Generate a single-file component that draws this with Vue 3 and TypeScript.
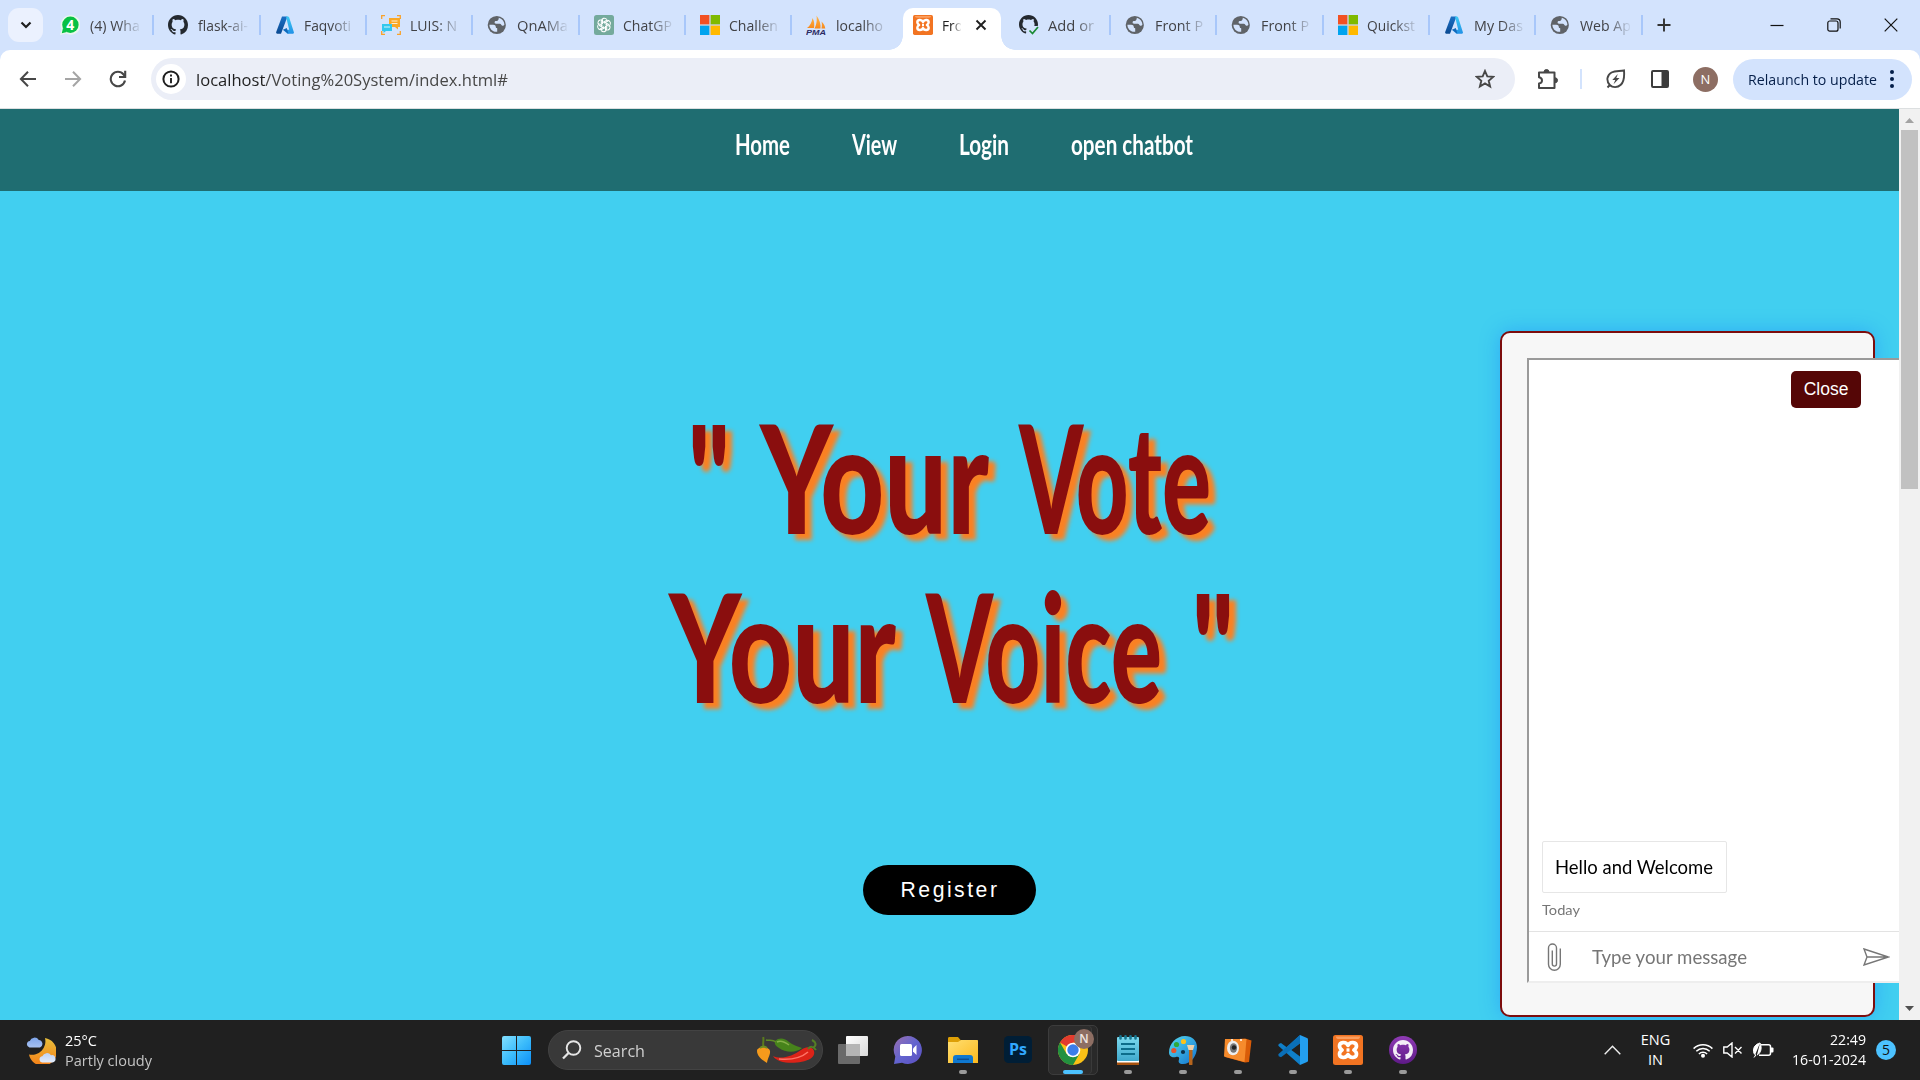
<script setup lang="ts">
interface Tab {
  icon: string
  title: string
  width: number
  active?: boolean
}

interface TaskApp {
  icon: string
  open?: boolean
  active?: boolean
}

const tabs: Tab[] = [
  { icon: 'whatsapp', title: '(4) Wha', width: 50 },
  { icon: 'github', title: 'flask-ai-', width: 50 },
  { icon: 'azure', title: 'Faqvoti', width: 47 },
  { icon: 'luis', title: 'LUIS: N', width: 47 },
  { icon: 'globe', title: 'QnAMa', width: 51 },
  { icon: 'openai', title: 'ChatGP', width: 49 },
  { icon: 'microsoft', title: 'Challen', width: 49 },
  { icon: 'pma', title: 'localho', width: 47 },
  { icon: 'xampp', title: 'Fro', width: 21, active: true },
  { icon: 'githubcheck', title: 'Add or', width: 46 },
  { icon: 'globe', title: 'Front P', width: 48 },
  { icon: 'globe', title: 'Front P', width: 48 },
  { icon: 'microsoft', title: 'Quickst', width: 48 },
  { icon: 'azure', title: 'My Das', width: 49 },
  { icon: 'globe', title: 'Web Ap', width: 51 },
]

const navLinks = [
  { label: 'Home', width: 55 },
  { label: 'View', width: 45 },
  { label: 'Login', width: 50 },
  { label: 'open chatbot', width: 122 },
]

const slogan = [
  [
    { text: '"', width: 42 },
    { text: 'Your', width: 229 },
    { text: 'Vote', width: 192 },
  ],
  [
    { text: 'Your', width: 227 },
    { text: 'Voice', width: 236 },
    { text: '"', width: 42 },
  ],
]

const apps: TaskApp[] = [
  { icon: 'taskview' },
  { icon: 'teams' },
  { icon: 'explorer', open: true },
  { icon: 'photoshop' },
  { icon: 'chrome', active: true },
  { icon: 'notepad', open: true },
  { icon: 'paint', open: true },
  { icon: 'snip', open: true },
  { icon: 'vscode', open: true },
  { icon: 'xampp', open: true },
  { icon: 'ghdesktop', open: true },
]

// Condenses or widens a label so that it takes the given number of pixels.
const vFit = {
  mounted(el: HTMLElement, binding: { value: number }) {
    const natural = el.getBoundingClientRect().width
    el.style.transform = `scaleX(${binding.value / natural})`
    el.style.marginRight = `${binding.value - natural}px`
  },
}
</script>

<template>
  <div class="desktop">
    <svg class="defs" width="0" height="0">
      <defs>
        <linearGradient id="gAz" x1="0" y1="0" x2="0" y2="1"><stop offset="0" stop-color="#1b6fc4" /><stop offset="1" stop-color="#0a4a92" /></linearGradient>
        <linearGradient id="gAz2" x1="0" y1="0" x2="0" y2="1"><stop offset="0" stop-color="#3ccbf4" /><stop offset="1" stop-color="#2291e6" /></linearGradient>
        <linearGradient id="gWin" x1="0" y1="0" x2="1" y2="1"><stop offset="0" stop-color="#83e0ff" /><stop offset=".5" stop-color="#3cbcfb" /><stop offset="1" stop-color="#0c8ff8" /></linearGradient>
        <linearGradient id="gMoon" x1="0" y1="0" x2="0" y2="1"><stop offset="0" stop-color="#e9c03c" /><stop offset="1" stop-color="#f57f17" /></linearGradient>
        <linearGradient id="gCloud" x1="0" y1="0" x2="0" y2="1"><stop offset="0" stop-color="#7fa6ec" /><stop offset="1" stop-color="#e3ecfb" /></linearGradient>
        <linearGradient id="gTeams" x1="0" y1="0" x2="1" y2="1"><stop offset="0" stop-color="#9b6fae" /><stop offset=".5" stop-color="#6364cf" /><stop offset="1" stop-color="#5b4fc0" /></linearGradient>
        <linearGradient id="gFold" x1="0" y1="0" x2="1" y2="1"><stop offset="0" stop-color="#ffdf72" /><stop offset="1" stop-color="#fcb91d" /></linearGradient>
        <linearGradient id="gNote" x1="0" y1="0" x2="0" y2="1"><stop offset="0" stop-color="#7bd9ee" /><stop offset="1" stop-color="#3fa9cd" /></linearGradient>
        <linearGradient id="gPaint" x1="0" y1="0" x2="1" y2="1"><stop offset="0" stop-color="#56dbf0" /><stop offset="1" stop-color="#1273d0" /></linearGradient>
        <linearGradient id="gGh" x1="0" y1="0" x2="0" y2="1"><stop offset="0" stop-color="#8f3bb5" /><stop offset="1" stop-color="#5e1a87" /></linearGradient>
        <linearGradient id="gTv" x1="0" y1="0" x2="1" y2="1"><stop offset="0" stop-color="#fff" /><stop offset="1" stop-color="#dadada" /></linearGradient>
        <linearGradient id="gPma" x1="0" y1="0" x2="0" y2="1"><stop offset="0" stop-color="#ffb84d" /><stop offset="1" stop-color="#f7891b" /></linearGradient>
      </defs>
      <symbol id="i-whatsapp" viewBox="0 0 20 20"><path d="M0 20 1.500 14A10 9.800 0 1 1 6 18.600Z" fill="#e9f7ee" /><circle cx="10.400" cy="9.800" r="8.200" fill="#08c143" /><path d="M1.800 18.200 3 13l4 4Z" fill="#08c143" /><text x="10.200" y="15" font-size="14" font-weight="700" font-family="Open Sans, sans-serif" fill="#fff" text-anchor="middle">4</text></symbol>
      <symbol id="i-octo" viewBox="0 0 16 16"><path d="M8 0C3.58 0 0 3.58 0 8c0 3.54 2.29 6.53 5.47 7.59.4.07.55-.17.55-.38 0-.19-.01-.82-.01-1.49-2.01.37-2.53-.49-2.69-.94-.09-.23-.48-.94-.82-1.13-.28-.15-.68-.52-.01-.53.63-.01 1.08.58 1.23.82.72 1.21 1.87.87 2.33.66.07-.52.28-.87.51-1.07-1.78-.2-3.64-.89-3.64-3.95 0-.87.31-1.59.82-2.15-.08-.2-.36-1.02.08-2.12 0 0 .67-.21 2.2.82.64-.18 1.32-.27 2-.27s1.36.09 2 .27c1.53-1.04 2.2-.82 2.2-.82.44 1.1.16 1.92.08 2.12.51.56.82 1.27.82 2.15 0 3.07-1.87 3.75-3.65 3.95.29.25.54.73.54 1.48 0 1.07-.01 1.93-.01 2.2 0 .21.15.46.55.38A8.01 8.01 0 0 0 16 8c0-4.42-3.58-8-8-8z" /></symbol>
      <symbol id="i-github" viewBox="0 0 20 20"><use href="#i-octo" width="20" height="20" fill="#24292f" /></symbol>
      <symbol id="i-githubcheck" viewBox="0 0 20 20"><use href="#i-octo" width="19" height="19" fill="#24292f" /><path d="M8 11h12v9H8Z" fill="#d3e3fd" /><path d="m10.500 15.500 3 3 5.500-6.500" fill="none" stroke="#1a8a34" stroke-width="1.700" /></symbol>
      <symbol id="i-azure" viewBox="0 0 20 20"><path d="M7 1.500h5.500L6 18.700H2.300c-1 0-1.400-.8-1.100-1.600Z" fill="url(#gAz)" /><path d="M11 1.500h1.800c.7 0 1.200.4 1.400 1l4.700 14.800c.3.800-.3 1.400-1 1.400h-5.500L8 14.800h6.200Z" fill="url(#gAz2)" /><path d="m8 14.800 3.800-1.800 1.600 5.700Z" fill="#1468b8" /></symbol>
      <symbol id="i-luis" viewBox="0 0 20 20"><path d="M.7 4V.7H4M16 .7h3.300V4M19.300 16v3.300H16M4 19.300H.7V16" fill="none" stroke="#f9a22b" stroke-width="1.300" /><path d="M8 3h11v9h-2v2.500L14 12H8Z" fill="#f9a825" /><path d="M1 9h10v7H5l-2.500 2V16H1Z" fill="#32c8ee" /><path d="M10.500 6h6M10.500 8.500h6M3 12h6" stroke="#fff" stroke-width="1" opacity=".8" /></symbol>
      <symbol id="i-globe" viewBox="0 0 20 20"><circle cx="9.800" cy="10" r="9.100" fill="#5f6368" /><path d="M2.400 9.800h3.800c1.500 0 2.600.9 2.600 2.200 0 .8.500 1.200 1.400 1.200v3.600c-4.500.6-7.800-3-7.800-7ZM11.800 2.800c3.200.8 5.500 3.600 5.600 7-.5.800-1.500 1.200-2.500.7-.8-.4-.8-1.700-2-1.700H9.200c-1.300 0-1.900-.9-1.500-2 .3-.8 1.200-.8 2-.8 1.300 0 2.100-1.200 2.100-3.200Z" fill="#d3e3fd" /></symbol>
      <symbol id="i-openai" viewBox="0 0 20 20"><rect width="20" height="20" rx="2.500" fill="#74aa9c" /><g fill="none" stroke="#fff" stroke-width="1.050"><path id="petal" d="M7.300 11.300V6.200a3 3 0 0 1 5.500-1.600M10 8.300l4.300-2.500" /><use href="#petal" transform="rotate(60 10 10)" /><use href="#petal" transform="rotate(120 10 10)" /><use href="#petal" transform="rotate(180 10 10)" /><use href="#petal" transform="rotate(240 10 10)" /><use href="#petal" transform="rotate(300 10 10)" /></g></symbol>
      <symbol id="i-microsoft" viewBox="0 0 20 20"><path fill="#c9c9c9" d="M0 0h20v20H0z" opacity=".7" /><path fill="#f25022" d="M0 0h9.300v9.300H0z" /><path fill="#7fba00" d="M10.700 0H20v9.300h-9.300z" /><path fill="#00a4ef" d="M0 10.700h9.300V20H0z" /><path fill="#ffb900" d="M10.700 10.700H20V20h-9.300z" /></symbol>
      <symbol id="i-pma" viewBox="0 0 20 20"><path d="M1 13c3-2 5-6 5.500-10 2 3 2 7 1.500 10ZM8.500 13.500C11 9 11 4 10.500.5c3 4 4.500 9 4 13ZM15.500 13.500c.6-3 .5-5 0-7 2.500 2 3.500 5 3.800 7Z" fill="url(#gPma)" /><text x="0" y="19.500" font-size="7.600" font-weight="700" font-style="italic" font-family="Liberation Sans, sans-serif" textLength="20" lengthAdjust="spacingAndGlyphs" fill="#2b2b63">PMA</text></symbol>
      <symbol id="i-xampp" viewBox="0 0 30 30"><rect width="30" height="30" rx="2.500" fill="#f27422" /><path d="M3 1.500h24c0 2-1 2.500-3 2.500H6C4 4 3 3.500 3 1.500Z" fill="#ffb27a" opacity=".7" /><path d="M15 10.300C13 6.300 6.500 6.700 6.500 11c0 2 1 3 2.600 4-1.600 1-2.600 2-2.600 4 0 4.300 6.500 4.700 8.500.7 2 4 8.500 3.600 8.500-.7 0-2-1-3-2.600-4 1.600-1 2.600-2 2.600-4 0-4.300-6.500-4.700-8.500-.7Z" fill="none" stroke="#fff" stroke-width="3.700" stroke-linejoin="round" /><path d="M13.500 15h3" stroke="#fff" stroke-width="3.400" /></symbol>
      <symbol id="i-taskview" viewBox="0 0 30 30"><rect x="8" y="1" width="22" height="20" rx="1" fill="url(#gTv)" /><rect x="0" y="9" width="22" height="20" rx="1" fill="#7d7d7d" opacity=".8" /><rect x="8" y="9" width="14" height="12" fill="#b5b5b5" /></symbol>
      <symbol id="i-teams" viewBox="0 0 30 30"><path d="M15 1a14 14 0 1 1-6 26.700L1 29l1.300-7.500A14 14 0 0 1 15 1Z" fill="url(#gTeams)" /><rect x="7" y="9" width="12" height="12" rx="1.500" fill="#fff" /><path d="m20 13.500 3.500-3.500v10L20 16.500Z" fill="#fff" /></symbol>
      <symbol id="i-explorer" viewBox="0 0 30 30"><path d="M0 3.500C0 2.500.6 2 1.500 2H10l3 3.500V12H0Z" fill="#dd9f06" /><path d="M0 7h10l3-2h16c.6 0 1 .4 1 1v22H0Z" fill="url(#gFold)" /><path d="M5 28v-5c0-2 1-3 3-3h14c2 0 3 1 3 3v5Z" fill="#0f78d0" /><path d="M9 24.300h12" stroke="#0a4f96" stroke-width="1.500" /></symbol>
      <symbol id="i-photoshop" viewBox="0 0 30 30"><rect x="1" y="1" width="28" height="27" rx="4.500" fill="#001e36" /><text x="15" y="19.500" font-size="16" font-weight="700" font-family="Open Sans, sans-serif" fill="#31a8ff" text-anchor="middle" textLength="18" lengthAdjust="spacingAndGlyphs">Ps</text></symbol>
      <symbol id="i-chrome" viewBox="0 0 30 30"><circle cx="15" cy="15" r="15" fill="#fbc116" /><path d="M15 15 2 7.500A15 15 0 0 1 28 7.500H15Z" fill="#e33b2e" /><path d="M2 7.500A15 15 0 0 0 15 30l6.500-11.200L8.500 18.800Z" fill="#22913f" /><circle cx="15" cy="15" r="7.300" fill="#fff" /><circle cx="15" cy="15" r="5.700" fill="#3b7de9" /></symbol>
      <symbol id="i-notepad" viewBox="0 0 30 30"><path d="M4 26h22v4H4Z" fill="#a6520f" /><path d="M4 25h22v2.500H4Z" fill="#fff" /><rect x="4" y="2" width="22" height="24" rx="1" fill="url(#gNote)" /><path d="M7.500 1.300v2.200M12.500 1.300v2.200M17.500 1.300v2.200M22.500 1.300v2.200" stroke="#16758f" stroke-width="2.600" stroke-linecap="round" /><path d="M8 9h14M8 14h14M8 19h14" stroke="#0d6d8b" stroke-width="1.800" /></symbol>
      <symbol id="i-paint" viewBox="0 0 30 30"><path d="M17 1c7 0 12 4.500 12 11 0 9-6 17-14 17-4 0-5-2-4-4.500.8-2-.5-3-3-2.500C4 23 1 21 1 17.500 1 9 8 1 17 1Z" fill="url(#gPaint)" /><circle cx="15.500" cy="6.500" r="2.600" fill="#fcc21b" /><circle cx="8.500" cy="9.500" r="2.600" fill="#2eaa3b" /><circle cx="5.800" cy="15.500" r="2.600" fill="#e5532d" /><circle cx="15" cy="17" r="2.100" fill="#0c3350" /><path d="M19 10h7.500l-1.500 5h-4.500Z" fill="#eed2ac" /><path d="M21 15h3.500v14a1.700 1.700 0 0 1-3.500 0Z" fill="#b6651d" /></symbol>
      <symbol id="i-snip" viewBox="0 0 30 30"><path d="m3 5 19-1.500 6.500 2L26 27l-4 .5L2 22Z" fill="#d95c08" /><path d="M2 4h21.500l-2 23L1 21.500Z" fill="#f68b2c" /><ellipse cx="10" cy="13" rx="6" ry="7.300" fill="#eee" /><ellipse cx="10.500" cy="13" rx="3.600" ry="4.800" fill="#777" /><circle cx="11" cy="12.500" r="2.200" fill="#222" /><path d="M8 5h2M17 5h2" stroke="#fff" stroke-width="1.500" /></symbol>
      <symbol id="i-vscode" viewBox="0 0 30 30"><path d="M22 0 8.700 12.200 3 7.900.700 9v0L.3 10.700 22 30Z" fill="#0f7fc9" /><path d="M22 8 3 22.200.700 21.200.3 19.300 22 0Z" fill="#0a6fb8" /><path d="M22 0 29 3c.6.300 1 .8 1 1.500v21c0 .7-.4 1.200-1 1.500l-7 3Z" fill="#239ff0" /><path d="M22 8.500v13L13.300 15Z" fill="#202020" /></symbol>
      <symbol id="i-ghdesktop" viewBox="0 0 30 30"><circle cx="15" cy="15" r="14" fill="url(#gGh)" /><use href="#i-octo" x="5" y="5" width="20" height="20" fill="#f3edf6" /></symbol>
    </svg>

    <header class="tabstrip">
      <button class="tabsearch"><svg width="12" height="8" viewBox="0 0 12 8"><path d="m1.500 1.500 4.500 4.500 4.500-4.500" fill="none" stroke="#1f1f1f" stroke-width="2.200" /></svg></button>
      <div v-for="(tab, i) in tabs" :key="i" class="tab" :class="{ active: tab.active, bare: i === 7 || tab.active }">
        <svg class="favicon"><use :href="'#i-' + tab.icon" /></svg>
        <span class="tabtitle"><span v-fit="tab.width" class="fit">{{ tab.title }}</span></span>
        <svg v-if="tab.active" class="tabclose" width="12" height="12" viewBox="0 0 12 12"><path d="m1.500 1.500 9 9m0-9-9 9" stroke="#1f1f1f" stroke-width="1.900" /></svg>
      </div>
      <svg class="newtab" width="14" height="14" viewBox="0 0 14 14"><path d="M7 .5v13M.5 7h13" stroke="#333" stroke-width="1.900" /></svg>
      <div class="winctl">
        <svg width="14" height="14" viewBox="0 0 14 14"><path d="M.5 7.500h13" stroke="#111" stroke-width="1.200" /></svg>
        <svg width="14" height="14" viewBox="0 0 14 14"><g fill="none" stroke="#111" stroke-width="1.200"><rect x=".8" y="3" width="10.200" height="10.200" rx="2" /><path d="M3.500.8H10c2 0 3.200 1.200 3.200 3.200v6.500" /></g></svg>
        <svg width="14" height="14" viewBox="0 0 14 14"><path d="m.7.700 12.600 12.600m0-12.600L.7 13.300" stroke="#111" stroke-width="1.200" /></svg>
      </div>
    </header>

    <div class="toolbar">
      <div class="navbtns">
        <svg width="18" height="18" viewBox="0 0 18 18"><path d="M17 9H2.500M9 1.800 1.900 9 9 16.200" fill="none" stroke="#474747" stroke-width="2" /></svg>
        <svg width="18" height="18" viewBox="0 0 18 18"><path d="M1 9h14.500M9 1.800 16.100 9 9 16.200" fill="none" stroke="#a5a5a5" stroke-width="2" /></svg>
        <svg width="18" height="18" viewBox="0 0 18 18"><path d="M16 10.500A7.200 7.200 0 1 1 14.600 4.500L16 6.300" fill="none" stroke="#474747" stroke-width="2.100" /><path d="M16.200.8v6.200H10" fill="none" stroke="#474747" stroke-width="2.100" /></svg>
      </div>
      <div class="omnibox">
        <span class="siteinfo"><svg width="18" height="18" viewBox="0 0 18 18"><circle cx="9" cy="9" r="7.600" fill="none" stroke="#1f1f1f" stroke-width="2" /><path d="M9 8v5.200M9 4.600v2" stroke="#1f1f1f" stroke-width="1.900" /></svg></span>
        <span v-fit="312" class="fit url"><b>localhost</b>/Voting%20System/index.html#</span>
        <svg class="star" width="20" height="20" viewBox="0 0 20 20"><path d="m10 2 2.300 5.400 5.900.5-4.500 3.900 1.400 5.700L10 14.400l-5.100 3.100 1.400-5.700L1.800 7.900l5.900-.5Z" fill="none" stroke="#474747" stroke-width="1.900" /></svg>
      </div>
      <svg class="puzzle" width="22" height="22" viewBox="0 0 22 22"><path d="M2 4.500h15.500V20H2v-4.500c4-.5 4-5.500 0-6.200Z" fill="none" stroke="#474747" stroke-width="2" stroke-linejoin="round" /><path d="M7 4a2.500 2.500 0 0 1 5 0M18 9.800a2.500 2.500 0 0 1 0 5" fill="#474747" stroke="#474747" /></svg>
      <i class="toolsep"></i>
      <svg class="leaf" width="20" height="20" viewBox="0 0 20 20"><path d="M3.800 16C0 12 .8 6 5.500 3.500 9.500 1.500 14 2.500 18 1.500c.5 6 .3 11-3.200 14.300C11.500 19 6.500 18.800 3.800 16Zm0 0L1.500 18.500" fill="none" stroke="#474747" stroke-width="1.900" /><path d="m11.800 5-5.500 6h3L7.500 15.300l6-6.300h-3.200Z" fill="#474747" /></svg>
      <svg class="panel" width="18" height="18" viewBox="0 0 18 18"><rect x="1" y="1" width="16" height="16" rx="1" fill="none" stroke="#3c3c3c" stroke-width="2" /><path d="M10.500 1H17v16h-6.500Z" fill="#3c3c3c" /></svg>
      <span class="avatar">N</span>
      <button class="relaunch"><span v-fit="129" class="fit">Relaunch to update</span><svg width="4" height="18" viewBox="0 0 4 18"><g fill="#041e49"><circle cx="2" cy="2" r="2" /><circle cx="2" cy="9" r="2" /><circle cx="2" cy="16" r="2" /></g></svg></button>
    </div>

    <div class="viewport">
      <main class="page">
        <nav class="sitenav">
          <a v-for="link in navLinks" :key="link.label" v-fit="link.width" class="fit">{{ link.label }}</a>
        </nav>
        <section class="hero">
          <h1>
            <span v-for="(line, l) in slogan" :key="l" class="line">
              <span v-for="(word, w) in line" :key="w" v-fit="word.width" class="fit">{{ word.text }}</span>
            </span>
          </h1>
          <button class="register">Register</button>
        </section>
        <aside class="chat">
          <div class="frame">
            <div class="transcript">
              <div class="bubble"><span v-fit="158" class="fit">Hello and Welcome</span></div>
              <div class="stamp"><span v-fit="38" class="fit">Today</span></div>
            </div>
            <div class="sendbox">
              <svg width="15" height="28" viewBox="0 0 15 28"><path d="M13.300 5.500v15.800a5.900 5.900 0 0 1-11.800 0V5a4 4 0 0 1 8 0v16a2.100 2.100 0 0 1-4.200 0V7.500" fill="none" stroke="#767676" stroke-width="1.400" /></svg>
              <span v-fit="155" class="fit">Type your message</span>
              <svg class="send" width="27" height="18" viewBox="0 0 27 18"><path d="M1 1 25.500 9 1 17l3-8Zm3 8h21.500" fill="none" stroke="#767676" stroke-width="1.400" /></svg>
            </div>
          </div>
          <button class="close">Close</button>
        </aside>
      </main>
      <div class="scrollbar">
        <svg width="9" height="5" viewBox="0 0 9 5"><path d="M0 5 4.500 0 9 5Z" fill="#a3a3a3" /></svg>
        <i class="thumb"></i>
        <svg width="9" height="5" viewBox="0 0 9 5"><path d="m0 0 4.500 5L9 0Z" fill="#505050" /></svg>
      </div>
    </div>

    <footer class="taskbar">
      <div class="weather">
        <svg width="30" height="28" viewBox="0 0 30 28"><path d="M19 2a14 14 0 1 1-16 16.500A13.500 13.500 0 0 0 19 2Z" fill="url(#gMoon)" /><path d="M3.500 11.500a3.300 3.300 0 0 1 .3-6.500 5 5 0 0 1 9-1 3.900 3.900 0 0 1 1.200 7.500ZM16 26.500a3.200 3.200 0 0 1 .3-6.300 5 5 0 0 1 8.700-1 3.700 3.700 0 0 1 1.500 7.300Z" fill="url(#gCloud)" /></svg>
        <div class="stack"><span v-fit="32" class="fit">25°C</span><span v-fit="87" class="fit dim">Partly cloudy</span></div>
      </div>
      <div class="start"><svg width="29" height="29" viewBox="0 0 29 29"><path d="M2 0h12v14H0V2Q0 0 2 0ZM15 0h12q2 0 2 2v12H15ZM0 15h14v14H2q-2 0-2-2ZM15 15h14v12q0 2-2 2H15Z" fill="url(#gWin)" /></svg></div>
      <div class="search">
        <svg width="20" height="20" viewBox="0 0 20 20"><circle cx="11.500" cy="8" r="6.800" fill="none" stroke="#e6e6e6" stroke-width="1.900" /><path d="m6.500 13-5.500 5.500" stroke="#e6e6e6" stroke-width="2.300" /></svg>
        <span v-fit="51" class="fit">Search</span>
        <svg class="peppers" width="60" height="28" viewBox="0 0 60 28"><path d="M0 15c0-5 12-5 13 0 .5 4-2 6-3 12C5 24 0 20 0 15Z" fill="#f59a1c" /><path d="M6.500 11c-1-4 .5-6-.3-10" fill="none" stroke="#5a7a1d" stroke-width="2" /><path d="M3 12q3.500-3 7 0" fill="none" stroke="#6c8d22" stroke-width="2" /><path d="M18 5c4-4 10-3 14 1 4 3 8 4 13 6-6 5-16 5-23 0-3-2-5-4-4-7Z" fill="#47831b" /><path d="M20 6c4-2 8 0 12 3" fill="none" stroke="#85b048" stroke-width="1.500" /><path d="M19 6C15 3 12 5 9 4" fill="none" stroke="#5e8a26" stroke-width="1.500" /><path d="M16 20c8 4 20 0 28-6 5-4 9-3 12-1 2 3 2 7-3 10-9 5-32 6-37-3Z" fill="#dc2318" /><path d="M22 23c11 1 22-1 29-7" fill="none" stroke="#ff7467" stroke-width="1.600" /><path d="M51 13c2-3 5-3 8 1M56 12c4-3 3-6-1-8" fill="none" stroke="#557f24" stroke-width="2" /></svg>
      </div>
      <div class="apps">
        <div v-for="app in apps" :key="app.icon" class="app" :class="{ open: app.open, current: app.active }">
          <svg class="appicon"><use :href="'#i-' + app.icon" /></svg>
          <span v-if="app.active" class="profile">N</span>
        </div>
      </div>
      <div class="tray">
        <svg class="chev" width="17" height="10" viewBox="0 0 17 10"><path d="m.7 9.300 7.800-8 7.800 8" fill="none" stroke="#eee" stroke-width="1.400" /></svg>
        <div class="stack lang"><span>ENG</span><span>IN</span></div>
        <svg class="wifi" width="20" height="15" viewBox="0 0 20 15"><g fill="none" stroke="#fff" stroke-width="1.500"><path d="M.6 5.600a13.300 13.300 0 0 1 18.800 0M3.300 8.300a9.500 9.500 0 0 1 13.400 0M5.900 11a5.800 5.800 0 0 1 8.200 0" /></g><circle cx="10" cy="12.800" r="2" fill="#fff" /></svg>
        <svg class="mute" width="20" height="16" viewBox="0 0 20 16"><path d="M.8 5h3.400L9 1v14l-4.800-4H.8ZM12 5l6.500 6.500M18.500 5 12 11.500" fill="none" stroke="#fff" stroke-width="1.400" /></svg>
        <svg class="batt" width="21" height="16" viewBox="0 0 21 16"><path d="M8 2.800h7.500a2 2 0 0 1 2 2v6.400a2 2 0 0 1-2 2H6" fill="none" stroke="#fff" stroke-width="1.500" /><path d="M18 5.500h1.500q1 0 1 1v3q0 1-1 1H18Z" fill="#fff" /><path d="M7 1C3 2 0 5 .5 9.500c.2 2 1.200 3.300 2.500 3.500L1 15.500M7 1c2 4 1.500 10-3 12" fill="#fff" stroke="#fff" /></svg>
        <div class="stack clock"><span v-fit="36" class="fit">22:49</span><span v-fit="74" class="fit">16-01-2024</span></div>
        <span class="count">5</span>
      </div>
    </footer>
  </div>
</template>

<style>
body {
  overflow: hidden;
}
</style>

<style scoped>
* {
  box-sizing: border-box;
}
.desktop {
  width: 1920px;
  height: 1080px;
  display: flex;
  flex-direction: column;
  overflow: hidden;
  font-family: "Open Sans", "Noto Sans", sans-serif;
  font-size: 15px;
  background: #d3e3fd;
}
.defs {
  position: absolute;
}
button {
  border: 0;
  padding: 0;
  font: inherit;
}
svg {
  flex: none;
  display: block;
}
.fit {
  display: inline-block;
  flex: none;
  white-space: nowrap;
  transform-origin: left center;
}
.tabstrip {
  height: 50px;
  flex: none;
  display: flex;
  align-items: center;
}
.tabsearch {
  width: 35px;
  height: 34px;
  flex: none;
  margin: 0 5px 0 8px;
  border-radius: 11px;
  background: #ebf1fe;
  display: flex;
  align-items: center;
  justify-content: center;
}
.tab {
  width: 106.320px;
  height: 20px;
  flex: none;
  display: flex;
  align-items: center;
  padding-left: 14px;
  border-right: 2px solid #a8c7fa;
  color: #414246;
}
.tab:nth-child(2) {
  padding-left: 12px;
}
.tab.bare {
  border-color: transparent;
}
.favicon {
  width: 20px;
  height: 20px;
}
.tabtitle {
  width: 50px;
  height: 24px;
  line-height: 24px;
  margin-left: 9.500px;
  overflow: hidden;
  mask-image: linear-gradient(90deg, #000 55%, transparent 104%);
}
.tab.active {
  width: 98.320px;
  margin: 0 4px;
  height: 42px;
  align-self: flex-end;
  padding: 0 0 8px 10px;
  border: 0;
  border-radius: 10px 10px 0 0;
  background: #fff;
  color: #1f1f1f;
  position: relative;
}
.tab.active::before,
.tab.active::after {
  content: "";
  position: absolute;
  bottom: 0;
  left: -14px;
  width: 14px;
  height: 14px;
  background: radial-gradient(circle at 0 0, transparent 13.500px, #fff 14px);
}
.tab.active::after {
  left: auto;
  right: -14px;
  background: radial-gradient(circle at 100% 0, transparent 13.500px, #fff 14px);
}
.tab.active .tabtitle {
  width: 19px;
}
.tabclose {
  margin-left: 14px;
}
.newtab {
  margin-left: 14px;
}
.winctl {
  margin-left: auto;
  padding-right: 22px;
  display: flex;
  gap: 43px;
}
.toolbar {
  height: 59px;
  flex: none;
  display: flex;
  align-items: center;
  background: #fff;
  border-radius: 10px 10px 0 0;
  border-bottom: 1px solid #dcdfe0;
}
.navbtns {
  display: flex;
  flex: none;
  gap: 27px;
  padding-left: 19px;
  width: 151px;
}
.omnibox {
  width: 1364px;
  height: 42px;
  flex: none;
  border-radius: 21px;
  background: #ebeef7;
  display: flex;
  align-items: center;
  padding: 0 20px 0 5px;
}
.siteinfo {
  width: 30px;
  height: 30px;
  flex: none;
  border-radius: 50%;
  background: #fff;
  display: flex;
  align-items: center;
  justify-content: center;
  margin-right: 10px;
}
.url {
  font-size: 17px;
  color: #474747;
}
.url b {
  font-weight: 400;
  color: #1f1f1f;
}
.star {
  margin-left: auto;
}
.puzzle {
  margin-left: 22px;
}
.toolsep {
  width: 2px;
  height: 20px;
  flex: none;
  background: #d3e3fd;
  margin: 0 24px 0 21px;
}
.panel {
  margin-left: 25px;
}
.avatar {
  width: 25px;
  height: 25px;
  flex: none;
  line-height: 25px;
  text-align: center;
  border-radius: 50%;
  background: #8d6e63;
  color: #fff;
  font-size: 13px;
  margin: 0 15px 0 24px;
}
.relaunch {
  width: 179px;
  height: 41px;
  flex: none;
  border-radius: 21px;
  background: #d3e3fd;
  color: #041e49;
  display: flex;
  align-items: center;
  gap: 13px;
  padding-left: 15px;
}
.viewport {
  height: 911px;
  flex: none;
  display: flex;
}
.page {
  width: 1899px;
  position: relative;
  overflow: hidden;
  background: #41cff0;
}
.sitenav {
  height: 82px;
  background: #1f6d71;
  display: flex;
  padding-left: 735px;
  gap: 62px;
  font: 700 29px/34px "Lato", sans-serif;
  color: #fff;
  padding-top: 18px;
}
.hero {
  display: flex;
  flex-direction: column;
  align-items: center;
}
h1 {
  margin: 201px 0 0;
  font: 900 150px/169px "Lato", sans-serif;
  color: #8a0e0e;
  filter: drop-shadow(7px 6px 2px #fa8122);
}
.line {
  display: flex;
  justify-content: center;
  gap: 30px;
}
.line + .line {
  padding-left: 4px;
}
.register {
  width: 173px;
  height: 50px;
  margin-top: 135px;
  border-radius: 25px;
  background: #000;
  color: #fff;
  font: 21.200px "Liberation Sans", Arial, sans-serif;
  letter-spacing: 2.500px;
  padding-left: 1px;
}
.chat {
  position: absolute;
  left: 1500px;
  top: 222px;
  width: 375px;
  height: 686px;
  border: 2px solid #7d0d0d;
  border-radius: 10px;
  background: #f7f7f7;
  box-shadow: 0 0 20px rgba(20, 120, 255, 0.4);
  padding: 25px;
}
.frame {
  width: 378px;
  height: 625px;
  background: #fff;
  border: 2px solid;
  border-color: #9a9a9a #eee #eee #9a9a9a;
  display: flex;
  flex-direction: column;
  font-family: "Lato", sans-serif;
}
.transcript {
  flex: 1;
  display: flex;
  flex-direction: column;
  justify-content: flex-end;
  align-items: flex-start;
  padding: 0 0 12px 13px;
}
.bubble {
  width: 185px;
  height: 52px;
  border: 1px solid #e6e6e6;
  border-radius: 2px;
  display: flex;
  align-items: center;
  padding-left: 12px;
  font-size: 18.500px;
  color: #000;
}
.stamp {
  font-size: 14px;
  line-height: 18px;
  color: #767676;
  margin-top: 8px;
}
.sendbox {
  height: 50px;
  border-top: 1px solid #e3e3e3;
  display: flex;
  align-items: center;
  padding: 1px 0 0 18px;
  font-size: 18.500px;
  color: #767676;
}
.sendbox .fit {
  margin-left: 29.500px;
}
.send {
  margin-left: 116px;
}
.close {
  position: absolute;
  left: 289px;
  top: 38px;
  width: 70px;
  height: 37px;
  border-radius: 5px;
  background: #550606;
  color: #fff;
  font: 17.500px "Liberation Sans", Arial, sans-serif;
}
.scrollbar {
  width: 21px;
  background: #f1f1f1;
  display: flex;
  flex-direction: column;
  align-items: center;
  padding: 9px 0;
}
.thumb {
  width: 17px;
  height: 359px;
  margin: 7px 0 auto;
  background: #c1c1c1;
}
.taskbar {
  height: 60px;
  background: #202020;
  display: flex;
  align-items: center;
  color: #fff;
}
.weather {
  width: 487.500px;
  padding-left: 26px;
  display: flex;
  align-items: center;
  gap: 9px;
}
.stack {
  display: flex;
  flex-direction: column;
  align-items: flex-start;
  line-height: 20.500px;
}
.dim {
  color: #c4c4c4;
}
.start {
  width: 60.500px;
  padding-left: 14px;
}
.search {
  width: 275px;
  height: 40px;
  border-radius: 20px;
  background: #393939;
  border: 1px solid #434343;
  display: flex;
  align-items: center;
  padding: 0 5px 0 13px;
  gap: 12px;
  font-size: 17px;
  color: #d0d0d0;
}
.peppers {
  margin-left: auto;
}
.apps {
  display: flex;
  margin-left: 2.500px;
}
.app {
  width: 55px;
  height: 60px;
  display: flex;
  align-items: center;
  justify-content: center;
  position: relative;
}
.appicon {
  width: 30px;
  height: 30px;
}
.app::after {
  position: absolute;
  bottom: 6px;
  height: 4px;
  border-radius: 2px;
}
.app.open::after {
  content: "";
  width: 8px;
  background: #9a9a9a;
}
.app.current {
  width: 50px;
  height: 50px;
  margin: 5px 2.500px;
  border: 1px solid #3c3c3c;
  border-radius: 5px;
  background: #2d2d2d;
  box-shadow: inset -5px 0 0 #292929, inset -6px 0 0 #3a3a3a;
}
.app.current::after {
  content: "";
  bottom: 0;
  width: 20px;
  background: #4cc2ff;
}
.profile {
  position: absolute;
  left: 25px;
  top: 3px;
  width: 20px;
  height: 20px;
  border-radius: 50%;
  background: #8d6e63;
  color: #f0e6e2;
  font-size: 12px;
  font-weight: 600;
  line-height: 20px;
  text-align: center;
}
.tray {
  margin-left: auto;
  padding-right: 24px;
  display: flex;
  align-items: center;
}
.lang {
  align-items: center;
  width: 31px;
  margin: 0 22px 0 19px;
  font-size: 14.500px;
}
.mute {
  margin-left: 10px;
}
.batt {
  margin-left: 10px;
}
.clock {
  align-items: flex-end;
  width: 74px;
  margin: 0 10px 0 18px;
  position: relative;
  top: -1px;
}
.count {
  width: 20px;
  height: 20px;
  border-radius: 50%;
  background: #4cc2ff;
  color: #111;
  font-size: 14px;
  line-height: 20px;
  text-align: center;
}
</style>
